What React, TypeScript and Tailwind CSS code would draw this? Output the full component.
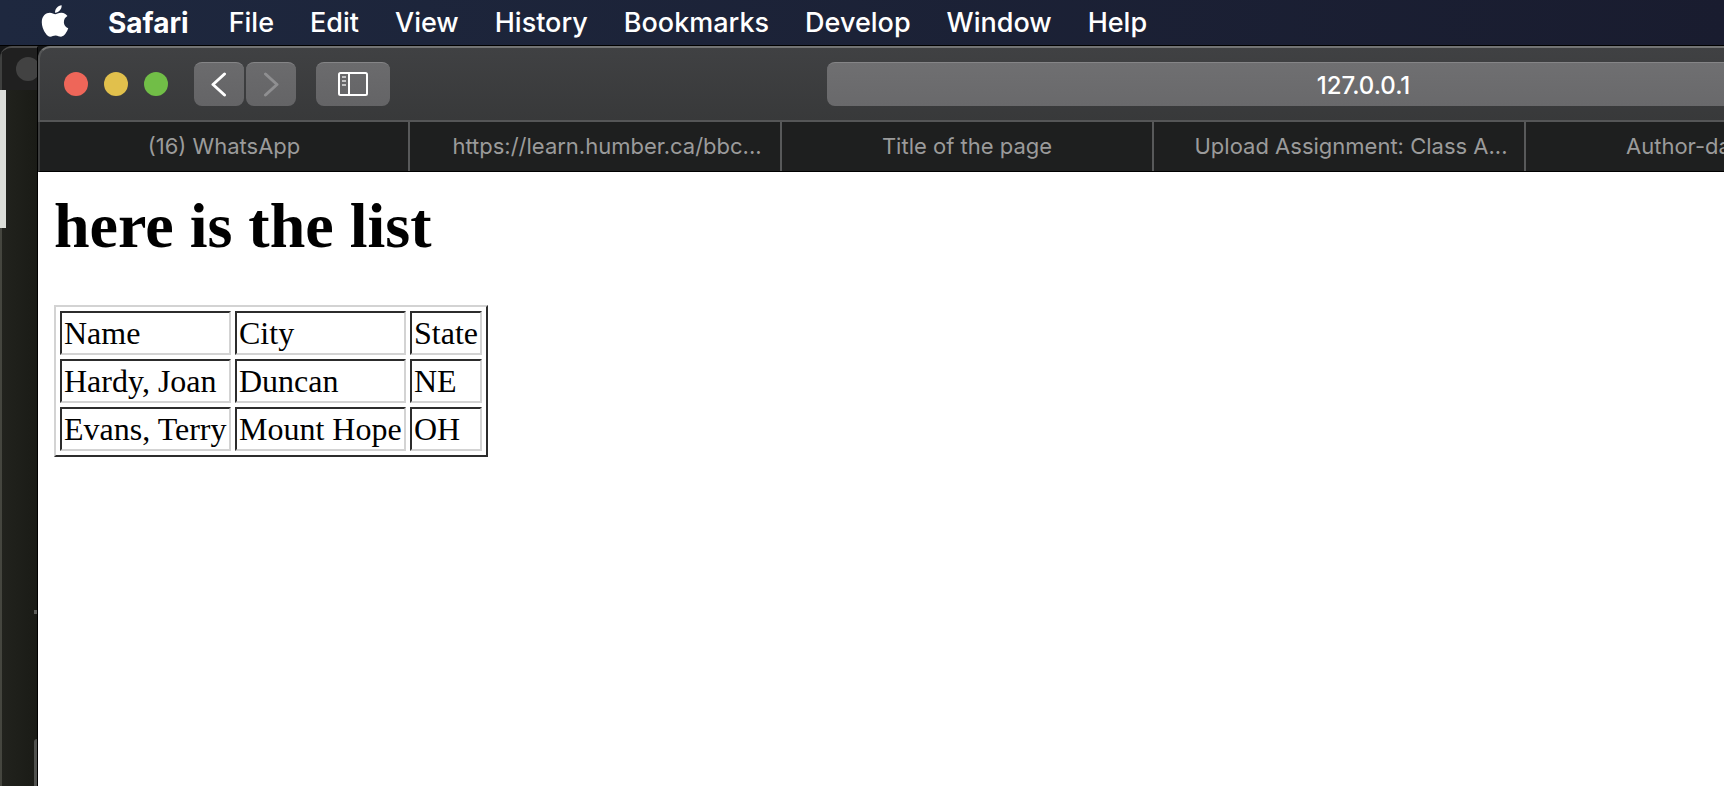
import React from "react";
import { FaApple } from "react-icons/fa";

const menus = ["File", "Edit", "View", "History", "Bookmarks", "Develop", "Window", "Help"];

const tabs = [
  { title: "(16) WhatsApp", pad: "px-2" },
  { title: "https://learn.humber.ca/bbc...", pad: "pl-8 pr-2" },
  { title: "Title of the page", pad: "px-2" },
  { title: "Upload Assignment: Class A...", pad: "pl-8 pr-2" },
];

const people = [
  ["Hardy, Joan", "Duncan", "NE"],
  ["Evans, Terry", "Mount Hope", "OH"],
];

const cell =
  "border-2 border-t-[#2c2c2c] border-l-[#2c2c2c] border-b-[#d3d3d3] border-r-[#d3d3d3] p-0.5 text-left font-normal whitespace-nowrap";

const toolButton =
  "flex h-11 items-center justify-center rounded-lg border-t border-[#858587] bg-linear-to-b from-[#6b6b6d] to-[#646466]";

function MenuBar() {
  return (
    <header className="flex h-[46px] shrink-0 items-center border-b border-black bg-linear-to-r from-[#1e283f] to-[#191c2f] pl-[41px] text-[27px] leading-8 font-medium text-white">
      <button aria-label="Apple menu" className="mr-[39px] flex pb-1">
        <FaApple className="h-9 w-7" />
      </button>
      <button className="mr-10 text-[28px] font-bold">Safari</button>
      <nav className="flex items-center gap-9">
        {menus.map((m) => (
          <button key={m}>{m}</button>
        ))}
      </nav>
    </header>
  );
}

function BackgroundWindow() {
  return (
    <aside className="flex w-[38px] shrink-0 flex-col overflow-hidden rounded-tl-xl border-t-2 border-r border-t-[#4a4a4a] border-r-black bg-linear-to-r from-[#22231e] to-[#1a1b16]">
      <div className="flex h-[42px] shrink-0 items-center border-l-2 border-[#3f403f] bg-[#202020] pl-3.5">
        <span className="size-6 shrink-0 rounded-full bg-[#424242]" />
      </div>
      <div className="h-[138px] w-1.5 shrink-0 bg-[#dcded9]" />
      <div className="flex flex-1 flex-col items-end border-l-2 border-[#45463f]">
        <span className="mt-[382px] h-1 w-[3px] bg-[#5c5d5a]" />
        <span className="mt-[125px] w-[3px] flex-1 rounded-tl-sm bg-[#50514e]" />
      </div>
    </aside>
  );
}

function Toolbar() {
  return (
    <div className="flex h-[76px] items-center rounded-tl-xl border-t-2 border-b-2 border-l-2 border-t-[#737474] border-b-[#555657] border-l-[#555657] bg-linear-to-b from-[#404143] to-[#38393a] pl-6">
      <div className="mr-[26px] flex gap-4">
        <button aria-label="Close" className="size-6 rounded-full bg-[#ee6659]" />
        <button aria-label="Minimize" className="size-6 rounded-full bg-[#e1c04c]" />
        <button aria-label="Zoom" className="size-6 rounded-full bg-[#71be47]" />
      </div>
      <div className="mr-5 flex gap-0.5">
        <button aria-label="Back" className={`${toolButton} w-[50px]`}>
          <svg width="16" height="26" viewBox="0 0 16 26" fill="none" stroke="#ffffff" strokeWidth="3" strokeLinecap="round" strokeLinejoin="round">
            <path d="M13.5 2 2 12.5 13.5 23" />
          </svg>
        </button>
        <button aria-label="Forward" className={`${toolButton} w-[50px]`}>
          <svg width="16" height="26" viewBox="0 0 16 26" fill="none" stroke="#8f8f91" strokeWidth="3" strokeLinecap="round" strokeLinejoin="round">
            <path d="M2.5 2 14 12.5 2.5 23" />
          </svg>
        </button>
      </div>
      <button aria-label="Show sidebar" className={`${toolButton} w-[74px] pb-px`}>
        <svg width="30" height="24" viewBox="0 0 30 24" fill="none" stroke="#ffffff" strokeWidth="2">
          <rect x="1" y="1" width="28" height="22" rx="1.5" />
          <path d="M11 1v22" />
          <path d="M4 5h4M4 9h4M4 13h4" stroke="#c4c4c5" />
        </svg>
      </button>
      <input
        aria-label="Address"
        defaultValue="127.0.0.1"
        className="ml-[437px] h-11 min-w-0 flex-1 rounded-l-lg border-t border-[#858587] bg-linear-to-b from-[#6f6f71] to-[#69696b] pt-0.5 pl-44 text-center text-[24px] font-medium text-white outline-none"
      />
    </div>
  );
}

function TabBar() {
  return (
    <div role="tablist" className="flex h-[50px] border-b border-l-2 border-b-black border-l-[#3b3c3c] bg-[#1e1f1f] text-[22px] leading-[46px] text-[#9b9b9b]">
      {tabs.map((t, i) => (
        <button
          key={t.title}
          role="tab"
          className={`${i === 0 ? "w-[370px]" : "w-[372px]"} ${t.pad} shrink-0 overflow-hidden border-r-2 border-[#58595a] pb-0.5 text-center whitespace-nowrap`}
        >
          {t.title}
        </button>
      ))}
      <button role="tab" className="min-w-0 flex-1 overflow-hidden pb-0.5 pl-[100px] text-left whitespace-nowrap">
        Author-da
      </button>
    </div>
  );
}

function PageContent() {
  return (
    <main className="flex-1 bg-white px-4 font-['Liberation_Serif',serif] text-black">
      <h1 className="pt-[17px] text-[64px] leading-[74px] font-bold">here is the list</h1>
      <table className="mt-[42px] border-separate border-spacing-1 border-2 border-t-[#d3d3d3] border-r-[#2c2c2c] border-b-[#2c2c2c] border-l-[#d3d3d3] text-[32px] leading-9">
        <thead>
          <tr>
            <th className={`${cell} min-w-[171px]`}>Name</th>
            <th className={`${cell} min-w-[171px]`}>City</th>
            <th className={cell}>State</th>
          </tr>
        </thead>
        <tbody>
          {people.map((row) => (
            <tr key={row[0]}>
              {row.map((value) => (
                <td key={value} className={cell}>
                  {value}
                </td>
              ))}
            </tr>
          ))}
        </tbody>
      </table>
    </main>
  );
}

export default function App() {
  return (
    <div className="flex min-h-screen flex-col bg-[#141516] font-['Inter',sans-serif]">
      <MenuBar />
      <div className="flex flex-1">
        <BackgroundWindow />
        <section className="flex min-w-0 flex-1 flex-col">
          <Toolbar />
          <TabBar />
          <PageContent />
        </section>
      </div>
    </div>
  );
}
